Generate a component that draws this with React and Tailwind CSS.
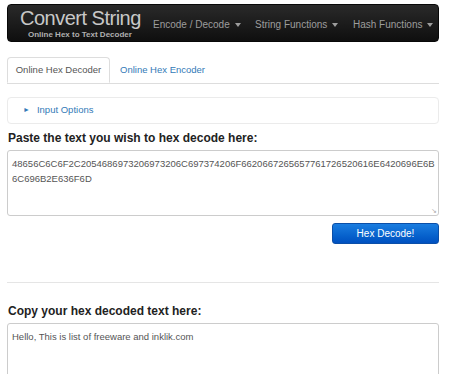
import React from 'react';

const Caret = () => (
  <span className="inline-block ml-[5px] align-middle border-t-[4px] border-x-[3.5px] border-x-transparent border-t-[#9d9d9d] w-0 h-0" />
);

const App = () => {
  return (
    <div className="w-[450px] h-[374px] overflow-hidden bg-white font-['Liberation_Sans',Arial,sans-serif] text-[#333]">
      <div className="pl-[7px] pr-[11px] pt-[4px]">
        {/* Navbar */}
        <div className="h-[38px] rounded-[4px] bg-gradient-to-b from-[#2a2a2a] to-[#0f0f0f] border border-[#080808] flex items-center whitespace-nowrap">
          <div className="pl-[12px] w-[145px] flex flex-col items-start leading-none">
            <span className="text-[20px] text-[#c8c8c8] tracking-[-0.5px]">Convert String</span>
            <span className="text-[8px] font-bold text-[#b0b0b0] ml-[8px] mt-[3px]">Online Hex to Text Decoder</span>
          </div>
          <div className="flex items-center text-[10px] text-[#9d9d9d] mt-[2px]">
            <span className="w-[102px]">Encode / Decode<Caret /></span>
            <span className="w-[98px]">String Functions<Caret /></span>
            <span>Hash Functions<Caret /></span>
          </div>
        </div>

        {/* Tabs */}
        <div className="mt-[15px] flex border-b border-[#ddd] text-[9.5px] whitespace-nowrap">
          <div className="w-[103px] h-[26px] flex items-center justify-center border border-[#ddd] border-b-white rounded-t-[4px] -mb-px bg-white text-[#555]">Online Hex Decoder</div>
          <div className="pl-[10px] h-[26px] flex items-center text-[#337ab7]">Online Hex Encoder</div>
        </div>

        {/* Input options */}
        <div className="mt-[13px] h-[27px] border border-[#ebebeb] rounded-[4px] flex items-center pl-[15px] text-[9.5px] text-[#337ab7]">
          <span className="text-[7px] mr-[7px]">&#9658;</span>
          <span>Input Options</span>
        </div>

        {/* Decode */}
        <div className="mt-[7px] text-[12px] font-bold text-[#222] leading-[15px] pl-[1px] whitespace-nowrap">Paste the text you wish to hex decode here:</div>
        <div className="mt-[4px] h-[66px] border border-[#ccc] rounded-[3px] px-[4px] pt-[5px] text-[9.5px] leading-[15px] text-[#555] whitespace-nowrap overflow-hidden relative">
          48656C6C6F2C2054686973206973206C697374206F6620667265657761726520616E6420696E6B<br />6C696B2E636F6D
          <span className="absolute right-[1px] bottom-[1px] text-[7px] text-[#aaa] leading-none">&#8600;</span>
        </div>
        <div className="mt-[7px] flex justify-end">
          <button className="w-[107px] h-[21px] rounded-[3px] bg-gradient-to-b from-[#1a7de0] to-[#0050c0] border border-[#0b4fa8] text-white text-[10px]">Hex Decode!</button>
        </div>

        <div className="mt-[38px] border-t border-[#e5e5e5]" />

        <div className="mt-[21px] text-[12px] font-bold text-[#222] leading-[15px] pl-[1px] whitespace-nowrap">Copy your hex decoded text here:</div>
        <div className="mt-[4px] h-[70px] border border-[#ccc] rounded-[3px] px-[4px] pt-[5px] text-[9.5px] leading-[15px] text-[#555]">
          Hello, This is list of freeware and inklik.com
        </div>
      </div>
    </div>
  );
};

export default App;
